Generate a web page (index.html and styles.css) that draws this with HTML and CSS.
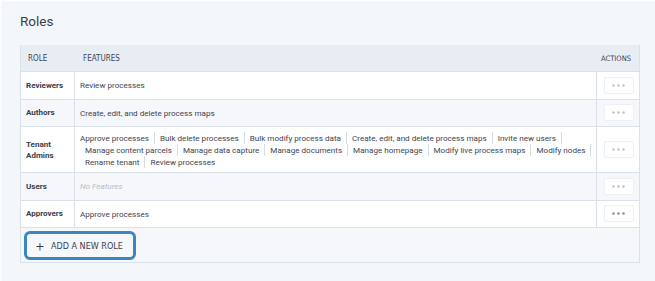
FILE: index.html
```html
<!DOCTYPE html>
<html>
<head>
<meta charset="utf-8">
<link rel="stylesheet" href="styles.css">
</head>
<body>
<div class="panel">
  <h1 class="title">Roles</h1>
  <div class="table">
    <div class="row head">
      <div class="c-role">ROLE</div>
      <div class="c-feat">FEATURES</div>
      <div class="c-act">ACTIONS</div>
    </div>
    <div class="row">
      <div class="c-role">Reviewers</div>
      <div class="c-feat"><span class="tag">Review processes</span></div>
      <div class="c-act"><span class="dots"><svg width="13" height="3" viewBox="0 0 13 3"><circle cx="1.5" cy="1.5" r="1.3"/><circle cx="6.5" cy="1.5" r="1.3"/><circle cx="11.5" cy="1.5" r="1.3"/></svg></span></div>
    </div>
    <div class="row alt">
      <div class="c-role">Authors</div>
      <div class="c-feat"><span class="tag">Create, edit, and delete process maps</span></div>
      <div class="c-act"><span class="dots"><svg width="13" height="3" viewBox="0 0 13 3"><circle cx="1.5" cy="1.5" r="1.3"/><circle cx="6.5" cy="1.5" r="1.3"/><circle cx="11.5" cy="1.5" r="1.3"/></svg></span></div>
    </div>
    <div class="row tall">
      <div class="c-role">Tenant<br>Admins</div>
      <div class="c-feat tags">
        <span class="tag sep">Approve processes</span><span class="tag sep">Bulk delete processes</span><span class="tag sep">Bulk modify process data</span><span class="tag sep">Create, edit, and delete process maps</span><span class="tag sep">Invite new users</span><span class="tag sep">Manage content parcels</span><span class="tag sep">Manage data capture</span><span class="tag sep">Manage documents</span><span class="tag sep">Manage homepage</span><span class="tag sep">Modify live process maps</span><span class="tag sep">Modify nodes</span><span class="tag sep">Rename tenant</span><span class="tag">Review processes</span>
      </div>
      <div class="c-act"><span class="dots"><svg width="13" height="3" viewBox="0 0 13 3"><circle cx="1.5" cy="1.5" r="1.3"/><circle cx="6.5" cy="1.5" r="1.3"/><circle cx="11.5" cy="1.5" r="1.3"/></svg></span></div>
    </div>
    <div class="row alt">
      <div class="c-role">Users</div>
      <div class="c-feat"><span class="none">No Features</span></div>
      <div class="c-act"><span class="dots"><svg width="13" height="3" viewBox="0 0 13 3"><circle cx="1.5" cy="1.5" r="1.3"/><circle cx="6.5" cy="1.5" r="1.3"/><circle cx="11.5" cy="1.5" r="1.3"/></svg></span></div>
    </div>
    <div class="row">
      <div class="c-role">Approvers</div>
      <div class="c-feat"><span class="tag">Approve processes</span></div>
      <div class="c-act"><span class="dots dark"><svg width="13" height="3" viewBox="0 0 13 3"><circle cx="1.5" cy="1.5" r="1.3"/><circle cx="6.5" cy="1.5" r="1.3"/><circle cx="11.5" cy="1.5" r="1.3"/></svg></span></div>
    </div>
    <div class="foot">
      <button class="add"><span class="plus">+</span>ADD A NEW ROLE</button>
    </div>
  </div>
</div>
</body>
</html>
```

FILE: styles.css
```css
html, body {
  margin: 0;
  padding: 0;
  background: #fbfcfd;
}
body {
  font-family: Roboto, "Liberation Sans", sans-serif;
  color: #3b4150;
  width: 655px;
  height: 281px;
  overflow: hidden;
}
.panel {
  margin: 2px 0 0 2px;
  height: 279px;
  background: #f4f7fa;
  border-top: 1px solid #eef2f6;
  border-left: 1px solid #eef2f6;
  padding: 0 16px 0 17px;
  box-sizing: border-box;
}
.title {
  margin: 0;
  padding-top: 10px;
  height: 42px;
  box-sizing: border-box;
  font-size: 13.5px;
  font-weight: 400;
  color: #3a3f4d;
  line-height: 16px;
}
.table {
  width: 620px;
  border: 1px solid #dbe1e9;
  border-top: none;
  box-sizing: border-box;
  background: #f5f7fa;
}
.row {
  display: flex;
  height: 27.5px;
  background: #ffffff;
  border-bottom: 1px solid #dbe1e9;
  box-sizing: border-box;
}
.row.alt { background: #f5f7fa; }
.row.tall { height: 46px; }
.row.head {
  height: 27px;
  background: #e8edf4;
  border-bottom: 1px solid #dbe1e9;
  font-family: "Liberation Sans Narrow", "DejaVu Sans Condensed", Roboto, sans-serif;
  font-size: 8px;
  color: #3f4552;
}
.c-role {
  width: 54px;
  flex: none;
  border-right: 1px solid #dbe1e9;
  box-sizing: border-box;
  padding-left: 5px;
  display: flex;
  align-items: center;
  font-size: 8px;
  font-weight: 700;
  line-height: 11px;
  color: #383d4a;
}
.c-feat {
  flex: 1;
  padding-left: 5px;
  display: flex;
  align-items: center;
  font-size: 8.1px;
  color: #3e4452;
}
.c-act {
  width: 43px;
  flex: none;
  border-left: 1px solid #dbe1e9;
  box-sizing: border-box;
  display: flex;
  align-items: center;
  justify-content: center;
}
.head .c-role, .head .c-feat {
  font-weight: 400;
  font-size: 8px;
  color: #3f4552;
  padding-left: 7px;
}
.head .c-feat { padding-left: 8px; }
.head .c-role { border-right: none; }
.head .c-act {
  border-left: none;
  justify-content: flex-end;
  padding-right: 8px;
  font-size: 7.5px;
}
.tags {
  flex-wrap: wrap;
  align-content: center;
  padding-right: 0;
}
.tag {
  line-height: 12px;
  white-space: nowrap;
}
.tags .tag {
  padding: 0 5px;
  margin: 0;
}
.tags .tag:first-child { padding-left: 0; }
.tag.sep { border-right: 1px solid #d6dce4; }
.none {
  font-style: italic;
  color: #b8bdc6;
}
.dots {
  display: flex;
  align-items: center;
  justify-content: center;
  width: 30px;
  height: 17px;
  background: #ffffff;
  border: 1px solid #edf0f4;
  border-radius: 2px;
  box-sizing: border-box;
  fill: #c4c9d1;
  margin-left: 1px;
}
.row.alt .dots { fill: #bfc4cc; }
.dots.dark { fill: #8a909a; }
.foot {
  height: 34px;
  padding: 3px 0 0 3px;
  box-sizing: border-box;
}
.add {
  display: flex;
  align-items: center;
  width: 112px;
  height: 29px;
  border: 3px solid #3a86c3;
  border-radius: 6px;
  background: #f5f7fa;
  font-family: "Liberation Sans Narrow", "DejaVu Sans Condensed", Roboto, sans-serif;
  font-size: 9px;
  color: #3b4150;
  padding: 0 0 0 9px;
  box-sizing: border-box;
  cursor: pointer;
}
.plus {
  font-family: Roboto, sans-serif;
  font-size: 14px;
  font-weight: 300;
  margin-right: 7px;
  line-height: 14px;
  color: #2f3440;
}
```
